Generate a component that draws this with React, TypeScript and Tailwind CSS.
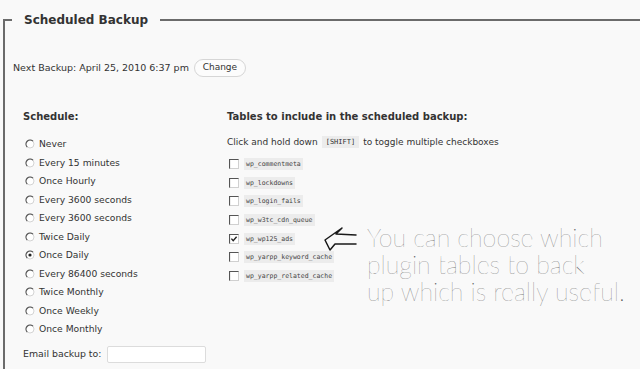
const schedules = [
  "Never",
  "Every 15 minutes",
  "Once Hourly",
  "Every 3600 seconds",
  "Every 3600 seconds",
  "Twice Daily",
  "Once Daily",
  "Every 86400 seconds",
  "Twice Monthly",
  "Once Weekly",
  "Once Monthly",
];

const tables = [
  { name: "wp_commentmeta", on: false },
  { name: "wp_lockdowns", on: false },
  { name: "wp_login_fails", on: false },
  { name: "wp_w3tc_cdn_queue", on: false },
  { name: "wp_wp125_ads", on: true },
  { name: "wp_yarpp_keyword_cache", on: false },
  { name: "wp_yarpp_related_cache", on: false },
];

function Radio({ checked }: { checked: boolean }) {
  return (
    <svg width="10" height="10" viewBox="0 0 10 10" className="shrink-0">
      <circle cx="5" cy="5" r="4" fill="#fff" stroke="#d4d4d4" strokeWidth="1" />
      <path d="M8 2.2 A4 4 0 0 0 2.2 8" fill="none" stroke="#555" strokeWidth="1.2" />
      {checked && <circle cx="5" cy="5" r="1.6" fill="#222" />}
    </svg>
  );
}

function Check({ checked }: { checked: boolean }) {
  return (
    <svg width="10" height="10" viewBox="0 0 10 10" className="shrink-0">
      <rect x="0.5" y="0.5" width="9" height="9" fill="#fff" stroke="#d0d0d0" />
      <path d="M0.5 9.5 V0.5 H9.5" fill="none" stroke="#555" strokeWidth="1.2" />
      {checked && <path d="M2.4 4.6 L4.2 6.6 L7.6 2.8" fill="none" stroke="#222" strokeWidth="1.4" />}
    </svg>
  );
}

export default function App() {
  return (
    <div className="relative w-[640px] h-[369px] overflow-hidden bg-[#f9f9f9] text-[#333] font-['DejaVu_Sans',sans-serif] text-[9px]">
      <div className="pt-[12px] pl-[3px]">
        <fieldset className="border-0 border-l-2 border-t-2 border-[#6b6b6b] h-[400px]">
          <legend className="ml-[7px] px-[12px] h-[16px] leading-[16px] text-[12px] font-bold text-[#333]">
            Scheduled Backup
          </legend>

          <div className="mt-[30px] pl-[8px] flex items-center h-[20px] text-[9.5px]">
            <span>Next Backup: April 25, 2010 6:37 pm</span>
            <button className="ml-[5px] h-[18px] w-[52px] rounded-full border border-[#d6d6d6] bg-[#fcfcfc] text-[9px] text-[#333]">
              Change
            </button>
          </div>

          <div className="mt-[32px] pl-[18px] flex">
            <div className="w-[204px]">
              <div className="h-[14px] leading-[14px] font-bold text-[10px]">Schedule:</div>
              <div className="mt-[11px]">
                {schedules.map((s, i) => (
                  <div key={i} className="h-[18.5px] flex items-center gap-[4px] pl-[2px]">
                    <Radio checked={s === "Once Daily"} />
                    <span className="text-[9.2px]">{s}</span>
                  </div>
                ))}
              </div>
              <div className="mt-[7px] h-[18px] flex items-center text-[9.4px]">
                <span>Email backup to:</span>
                <input className="ml-[6px] h-[17px] w-[99px] bg-white border border-[#dcdcdc] rounded-[2px]" />
              </div>
            </div>

            <div>
              <div className="h-[14px] leading-[14px] font-bold text-[10px]">Tables to include in the scheduled backup:</div>
              <div className="mt-[11px] h-[14px] leading-[14px] flex items-center">
                Click and hold down
                <code className="mx-[4px] px-[4px] bg-[#ececec] font-['DejaVu_Sans_Mono',monospace] text-[7px] leading-[12px]">
                  [SHIFT]
                </code>
                to toggle multiple checkboxes
              </div>
              <div className="mt-[5.6px]">
                {tables.map((t) => (
                  <div key={t.name} className="h-[18.7px] flex items-center gap-[5px] pl-[2px]">
                    <Check checked={t.on} />
                    <code className="px-[2px] bg-[#ececec] font-['DejaVu_Sans_Mono',monospace] text-[6.5px] leading-[12px] text-[#444]">
                      {t.name}
                    </code>
                  </div>
                ))}
              </div>
            </div>
          </div>
        </fieldset>
      </div>

      <div className="absolute left-[322px] top-[224px] flex items-start">
        <svg width="36" height="28" viewBox="0 0 36 28" className="mt-[2px]">
          <path
            d="M34 9 L14 8 L20 2 L3 14 L8 24 L13 18 L34 18"
            fill="none"
            stroke="#1a1a1a"
            strokeWidth="1.5"
            strokeLinejoin="round"
            strokeLinecap="round"
          />
        </svg>
        <div className="ml-[9px] font-['Lato',sans-serif] font-extralight text-[25px] leading-[27px] text-[#5a5a5a]">
          <div className="h-[27px]">You can choose which</div>
          <div className="h-[27px]">plugin tables to back</div>
          <div className="h-[27px]">up which is really useful.</div>
        </div>
      </div>
    </div>
  );
}
